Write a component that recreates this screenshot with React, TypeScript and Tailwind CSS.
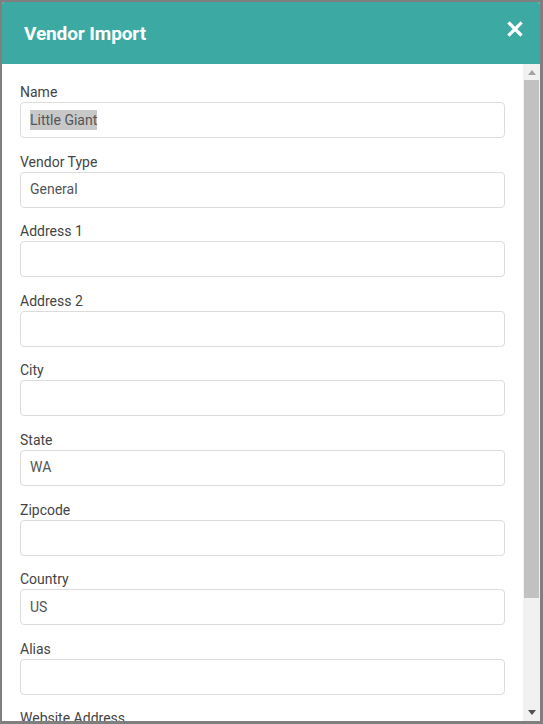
import React from "react";

const fields: { label: string; value: string; selected?: boolean }[] = [
  { label: "Name", value: "Little Giant", selected: true },
  { label: "Vendor Type", value: "General" },
  { label: "Address 1", value: "" },
  { label: "Address 2", value: "" },
  { label: "City", value: "" },
  { label: "State", value: "WA" },
  { label: "Zipcode", value: "" },
  { label: "Country", value: "US" },
  { label: "Alias", value: "" },
  { label: "Website Address", value: "" },
];

export default function App() {
  return (
    <div
      className="w-[543px] h-[724px] bg-[#7f7f7f] pl-[2px] pt-[2px] pr-[3px] pb-[3px] overflow-hidden"
      style={{ fontFamily: "Roboto, 'Noto Sans', sans-serif" }}
    >
      <div className="w-[538px] h-[719px] bg-white rounded-t-[3px] flex flex-col overflow-hidden">
        <div className="h-[62px] bg-[#3ca9a2] flex items-center justify-between pl-[22px] pr-[17px] shrink-0">
          <div className="text-white text-[19px] font-bold tracking-[-0.1px] mt-[2px]">Vendor Import</div>
          <svg width="16" height="16" viewBox="0 0 16 16" className="mt-[-9px]">
            <path d="M2.5 2.5 L13.5 13.5 M13.5 2.5 L2.5 13.5" stroke="white" strokeWidth="3.2" strokeLinecap="square" />
          </svg>
        </div>
        <div className="flex flex-1 min-h-0">
          <div className="flex-1 overflow-hidden pl-[18px] pr-[18px] pt-[18px]">
            {fields.map((f) => (
              <div key={f.label} className="mb-[13.6px]">
                <div className="text-[14px] leading-[20px] text-[#444]">{f.label}</div>
                <div className="h-[36px] border border-[#dcdcdc] rounded-[4px] flex items-center px-[9px] text-[14px] text-[#555]">
                  {f.selected ? (
                    <span className="bg-[#c8c8c8] leading-[20px]">{f.value}</span>
                  ) : (
                    <span>{f.value}</span>
                  )}
                </div>
              </div>
            ))}
          </div>
          <div className="w-[17px] bg-[#f1f1f1] flex flex-col items-center shrink-0">
            <div className="h-[16px] flex items-center justify-center">
              <svg width="8" height="5" viewBox="0 0 8 5">
                <path d="M0 5 L4 0 L8 5 Z" fill="#a3a3a3" />
              </svg>
            </div>
            <div className="w-[15px] h-[518px] bg-[#c1c1c1]" />
            <div className="flex-1" />
            <div className="h-[16px] flex items-center justify-center mb-[1px]">
              <svg width="8" height="5" viewBox="0 0 8 5">
                <path d="M0 0 L8 0 L4 5 Z" fill="#505050" />
              </svg>
            </div>
          </div>
        </div>
      </div>
    </div>
  );
}
